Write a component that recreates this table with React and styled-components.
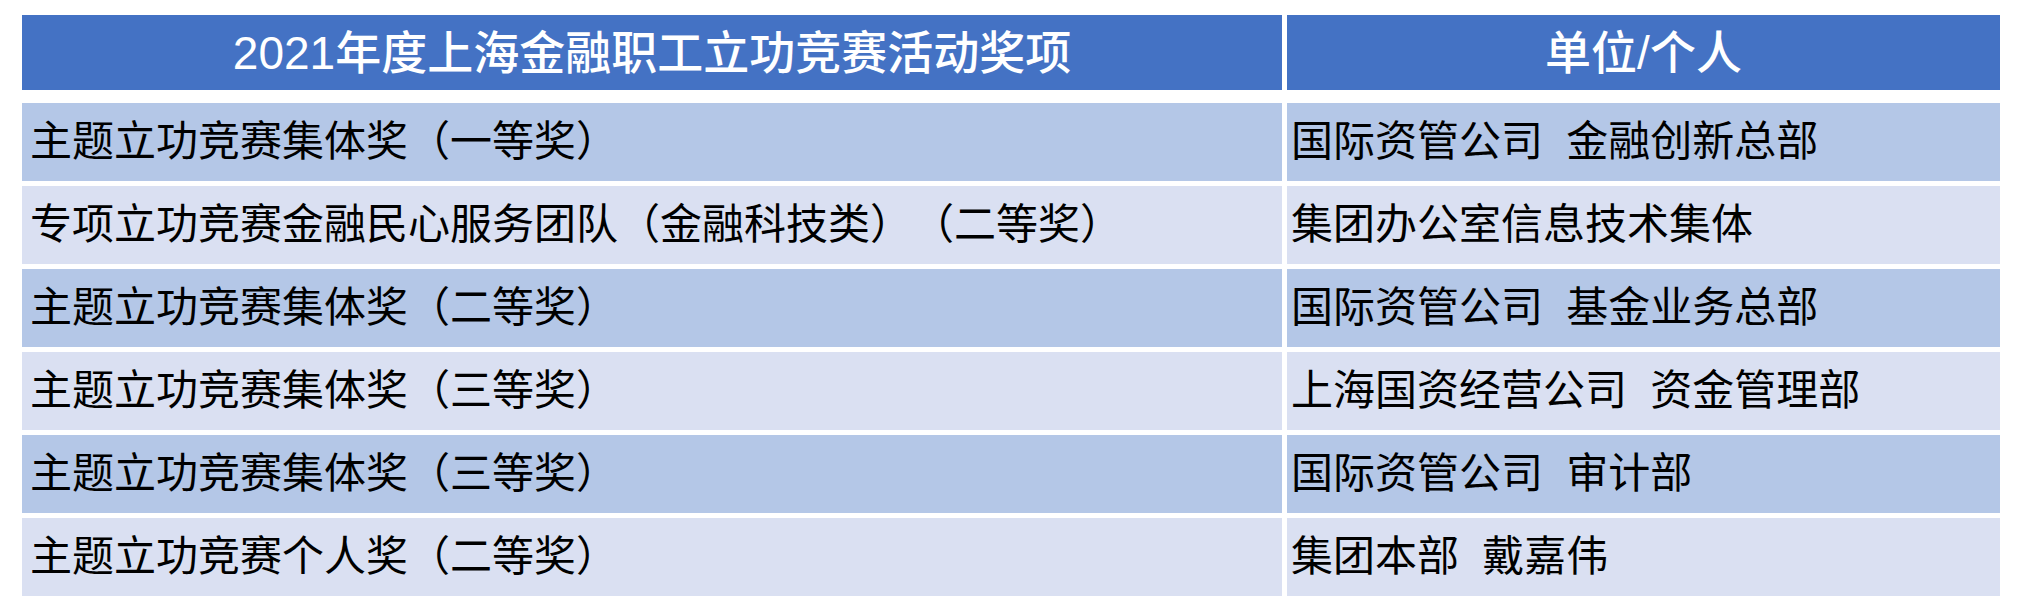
import React from "react";
import styled, { createGlobalStyle } from "styled-components";

const GlobalStyle = createGlobalStyle`
  html, body {
    margin: 0;
    padding: 0;
    background: #ffffff;
  }
  body {
    font-family: "Liberation Sans", "Noto Sans CJK SC", sans-serif;
  }
`;

const Page = styled.div`
  width: 2020px;
  height: 614px;
  box-sizing: border-box;
  padding: 15px 20px 0 22px;
  background: #ffffff;
`;

const Table = styled.div`
  display: flex;
  flex-direction: column;
  gap: 5px;
`;

const Row = styled.div`
  display: grid;
  grid-template-columns: 1260px 713px;
  column-gap: 5px;
  height: ${(p) => (p.$header ? "75px" : "78px")};
  margin-bottom: ${(p) => (p.$header ? "8px" : "0")};
`;

const HeaderCell = styled.div`
  background: #4472c4;
  color: #ffffff;
  font-family: "Liberation Sans", "Noto Sans CJK SC", sans-serif;
  font-size: 46px;
  font-weight: 500;
  line-height: 1;
  display: flex;
  align-items: center;
  justify-content: center;
  white-space: pre;
  text-spacing-trim: space-all;
`;

const Cell = styled.div`
  background: ${(p) => (p.$band ? "#b4c7e7" : "#dae0f2")};
  color: #000000;
  font-family: "Liberation Sans", "Noto Sans CJK SC", sans-serif;
  font-size: 42px;
  line-height: 1;
  display: flex;
  align-items: center;
  padding-left: ${(p) => (p.$first ? "8px" : "4px")};
  white-space: pre;
  text-spacing-trim: space-all;
  font-feature-settings: normal;
`;

const rows = [
  ["主题立功竞赛集体奖（一等奖）", "国际资管公司  金融创新总部"],
  ["专项立功竞赛金融民心服务团队（金融科技类）（二等奖）", "集团办公室信息技术集体"],
  ["主题立功竞赛集体奖（二等奖）", "国际资管公司  基金业务总部"],
  ["主题立功竞赛集体奖（三等奖）", "上海国资经营公司  资金管理部"],
  ["主题立功竞赛集体奖（三等奖）", "国际资管公司  审计部"],
  ["主题立功竞赛个人奖（二等奖）", "集团本部  戴嘉伟"],
];

export default function App() {
  return (
    <>
      <GlobalStyle />
      <Page>
        <Table>
          <Row $header>
            <HeaderCell>2021年度上海金融职工立功竞赛活动奖项</HeaderCell>
            <HeaderCell>单位/个人</HeaderCell>
          </Row>
          {rows.map(([award, unit], i) => (
            <Row key={i}>
              <Cell $band={i % 2 === 0} $first>
                {award}
              </Cell>
              <Cell $band={i % 2 === 0}>{unit}</Cell>
            </Row>
          ))}
        </Table>
      </Page>
    </>
  );
}
